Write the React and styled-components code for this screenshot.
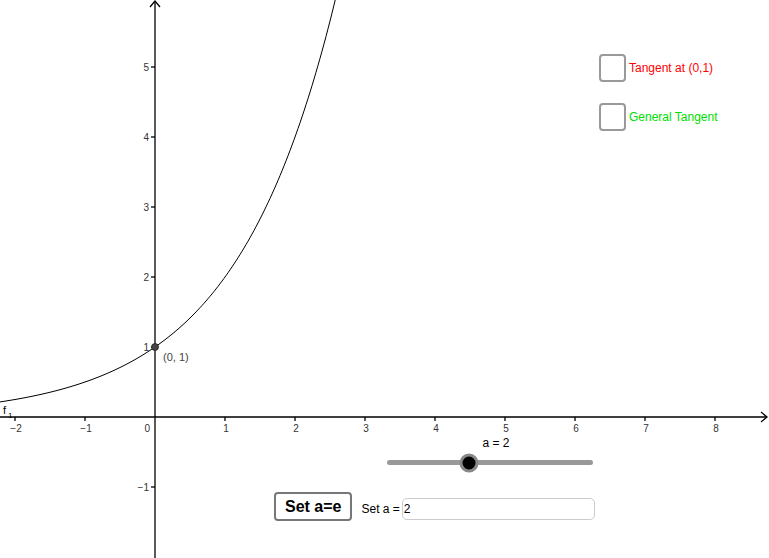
import React from 'react';
import styled, { createGlobalStyle } from 'styled-components';

const GlobalStyle = createGlobalStyle`
  html, body {
    margin: 0;
    padding: 0;
    background: #ffffff;
    font-family: "Liberation Sans", Arial, sans-serif;
  }
`;

const Applet = styled.div`
  position: relative;
  width: 769px;
  height: 558px;
  overflow: hidden;
  background: #ffffff;
`;

const Graph = styled.svg`
  position: absolute;
  left: 0;
  top: 0;
  display: block;
`;

const CheckList = styled.div`
  position: absolute;
  left: 599px;
  top: 54px;
  display: flex;
  flex-direction: column;
  gap: 21px;
`;

const CheckRow = styled.label`
  display: flex;
  align-items: center;
  gap: 3px;
  font-size: 12px;
  color: ${(p) => p.$color};
  cursor: pointer;
`;

const Box = styled.span`
  width: 23px;
  height: 24px;
  border: 2px solid #999999;
  border-radius: 4px;
  background: #ffffff;
`;

const SliderWrap = styled.div`
  position: absolute;
  left: 387px;
  top: 436px;
  width: 206px;
  display: flex;
  flex-direction: column;
  align-items: center;
  gap: 10px;
`;

const SliderLabel = styled.span`
  font-size: 12px;
  color: #000000;
  margin-left: 12px;
`;

const Track = styled.div`
  position: relative;
  width: 206px;
  height: 5px;
  border-radius: 3px;
  background: #999999;
`;

const Knob = styled.span`
  position: absolute;
  top: 50%;
  width: 13px;
  height: 13px;
  border-radius: 50%;
  background: #000000;
  border: 3px solid #888888;
  transform: translate(-50%, -50%);
`;

const Controls = styled.div`
  position: absolute;
  left: 274px;
  top: 492px;
  display: flex;
  align-items: center;
`;

const Button = styled.button`
  height: 29px;
  padding: 0 9px;
  border: 2px solid #777777;
  border-radius: 4px;
  background: #ffffff;
  font-family: "Liberation Sans", Arial, sans-serif;
  font-weight: bold;
  font-size: 16px;
  color: #000000;
`;

const InputLabel = styled.span`
  margin-left: 9px;
  margin-top: 4px;
  font-size: 12px;
  color: #000000;
`;

const Field = styled.div`
  width: 190px;
  height: 20px;
  margin-left: 2px;
  margin-top: 4px;
  border: 1px solid #cccccc;
  border-radius: 5px;
  font-size: 12px;
  line-height: 20px;
  padding-left: 1px;
  color: #000000;
`;

const O = { x: 155, y: 417 };
const U = 70;
const px = (x) => O.x + x * U;
const py = (y) => O.y - y * U;

const curvePoints = () => {
  const pts = [];
  for (let sx = 0; sx <= 340; sx += 2) {
    const x = (sx - O.x) / U;
    const y = Math.pow(2, x);
    pts.push(`${sx},${py(y).toFixed(2)}`);
  }
  return pts.join(' ');
};

const xTicks = [-2, -1, 1, 2, 3, 4, 5, 6, 7, 8];
const yTicks = [-1, 1, 2, 3, 4, 5];
const fmt = (n) => (n < 0 ? `\u2212${-n}` : `${n}`);

// slider range used by the applet
const A_MIN = -2;
const A_MAX = 8;

const App = () => {
  const a = 2;
  const knobPos = ((a - A_MIN) / (A_MAX - A_MIN)) * 100;

  return (
    <Applet>
      <GlobalStyle />
      <Graph width="769" height="558" viewBox="0 0 769 558">
        <g stroke="#000" strokeWidth="1.3" fill="none">
          <line x1="0" y1={O.y} x2="767" y2={O.y} />
          <polyline points={`761,${O.y - 5} 767,${O.y} 761,${O.y + 5}`} />
          <line x1={O.x} y1="1" x2={O.x} y2="558" />
          <polyline points={`${O.x - 5},7 ${O.x},1 ${O.x + 5},7`} />
          {xTicks.map((t) => (
            <line key={t} x1={px(t)} y1={O.y} x2={px(t)} y2={O.y + 4} />
          ))}
          {yTicks.map((t) => (
            <line key={t} x1={O.x - 4} y1={py(t)} x2={O.x} y2={py(t)} />
          ))}
        </g>
        <g fontFamily="Liberation Sans, Arial, sans-serif" fontSize="10" fill="#333">
          {xTicks.map((t) => (
            <text key={t} x={px(t) + 1} y={O.y + 15} textAnchor="middle">
              {fmt(t)}
            </text>
          ))}
          <text x={O.x - 5} y={O.y + 15} textAnchor="end">0</text>
          {yTicks.map((t) => (
            <text key={t} x={O.x - 6} y={py(t) + 4} textAnchor="end">
              {fmt(t)}
            </text>
          ))}
        </g>
        <polyline points={curvePoints()} fill="none" stroke="#000" strokeWidth="1" />
        <circle cx={O.x} cy={py(1)} r="3.5" fill="#444" stroke="#222" strokeWidth="0.8" />
        <g fontFamily="Liberation Sans, Arial, sans-serif" fill="#444">
          <text x="163" y="361" fontSize="11">(0, 1)</text>
          <text x="3" y="414" fontSize="11" fill="#000">f</text>
          <text x="8" y="418" fontSize="8" fill="#000">1</text>
        </g>
      </Graph>

      <CheckList>
        <CheckRow $color="#ff0000">
          <Box />
          Tangent at (0,1)
        </CheckRow>
        <CheckRow $color="#00dd00">
          <Box />
          General Tangent
        </CheckRow>
      </CheckList>

      <SliderWrap>
        <SliderLabel>a = {a}</SliderLabel>
        <Track>
          <Knob style={{ left: `${knobPos}%` }} />
        </Track>
      </SliderWrap>

      <Controls>
        <Button>Set a=e</Button>
        <InputLabel>Set a =</InputLabel>
        <Field>{a}</Field>
      </Controls>
    </Applet>
  );
};

export default App;
